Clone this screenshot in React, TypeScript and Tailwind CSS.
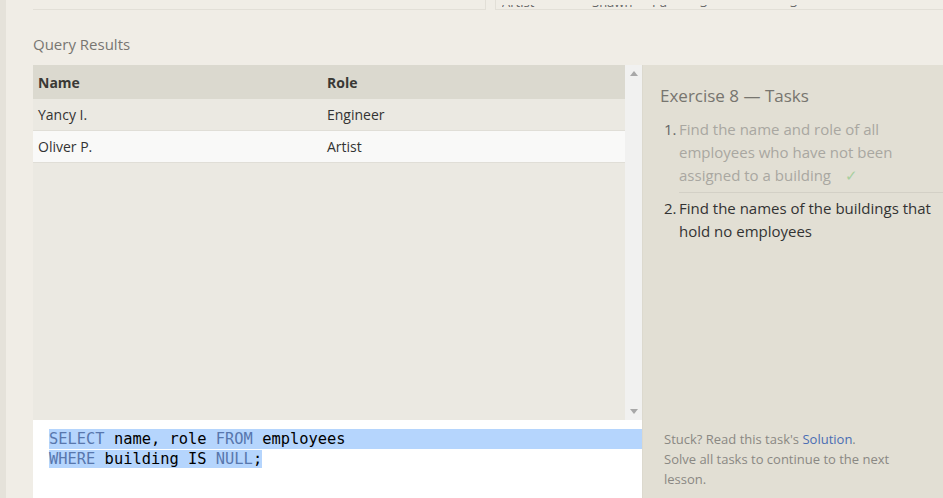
import React from "react";

const ui = { fontFamily: '"Open Sans", "Noto Sans", sans-serif' };
const mono = { fontFamily: '"DejaVu Sans Mono", "Liberation Mono", monospace' };

function Scrollbar() {
  return (
    <div className="flex w-[17px] flex-col items-center justify-between bg-[#f1f1f0] py-[6px]">
      <svg width="8" height="5" viewBox="0 0 8 5">
        <path d="M0 5 L4 0 L8 5 Z" fill="#a8a8a8" />
      </svg>
      <svg width="8" height="5" viewBox="0 0 8 5">
        <path d="M0 0 L8 0 L4 5 Z" fill="#a8a8a8" />
      </svg>
    </div>
  );
}

const rows = [
  { name: "Yancy I.", role: "Engineer", alt: false },
  { name: "Oliver P.", role: "Artist", alt: true },
];

export default function App() {
  return (
    <div className="flex h-[498px] w-[943px] overflow-hidden bg-[#f0ede6]" style={ui}>
      <div className="w-[6px] shrink-0 bg-[#e5e2da]" />
      <div className="flex min-w-0 flex-1 flex-col pl-[27px]">
        {/* previous tables, scrolled off the top */}
        <div className="flex h-[10px] shrink-0">
          <div className="w-[453px] border-r border-b border-[#e2dfd7]" />
          <div className="ml-[9px] flex flex-1 flex-col justify-end border-b border-l border-[#e2dfd7] pl-[6px] text-[13px] leading-[20px] text-[#666]">
            <div className="mb-[1px] h-[3px] overflow-hidden">
              <div className="-mt-[13px] flex">
                <span className="w-[90px]">Artist</span>
                <span className="w-[60px]">Shawn</span>
                <span className="w-[48px]">Pa</span>
                <span className="w-[90px]">3</span>
                <span>3</span>
              </div>
            </div>
          </div>
        </div>

        <div className="mt-[24px] h-[20px] text-[15px] leading-[20px] text-[#787672]">Query Results</div>

        <div className="mt-[11px] flex min-h-0 flex-1">
          <div className="flex w-[609px] shrink-0 flex-col">
            <div className="flex h-[355px]">
              <div className="flex flex-1 flex-col bg-[#ebe9e2] text-[14px] text-[#333]">
                <div className="flex h-[34px] items-center bg-[#dbd9cf] font-bold text-[#3a3936]">
                  <div className="w-[294px] pl-[5px]">Name</div>
                  <div>Role</div>
                </div>
                {rows.map((r) => (
                  <div
                    key={r.name}
                    className={`flex h-[32px] items-center border-b border-[#e0ded7] ${r.alt ? "bg-[#f9f9f8]" : "bg-[#ebe9e2]"}`}
                  >
                    <div className="w-[294px] pl-[5px]">{r.name}</div>
                    <div>{r.role}</div>
                  </div>
                ))}
              </div>
              <Scrollbar />
            </div>
            <div className="flex-1 bg-white pt-[9px] text-[15.4px] leading-[20px] text-black" style={mono}>
              <div className="ml-[16px] bg-[#b5d5fd]">
                <span className="text-[#5877ad]">SELECT</span> name, role <span className="text-[#5877ad]">FROM</span> employees
              </div>
              <div className="ml-[16px]">
                <span className="bg-[#b5d5fd]">
                  <span className="text-[#5877ad]">WHERE</span> building IS <span className="text-[#5877ad]">NULL</span>;
                </span>
              </div>
            </div>
          </div>

          <div className="flex flex-1 flex-col border-l border-[#dcd9ce] bg-[#e2dfd4] pl-[17px]">
            <div className="pt-[19px] text-[17px] leading-[24px] text-[#77756f]">Exercise 8 — Tasks</div>
            <ol className="mt-[10px] text-[15px] leading-[23px]">
              <li className="flex">
                <span className="w-[19px] pl-[4px] text-[#666]">1.</span>
                <div className="flex-1 pb-[5px] pr-[20px] text-[#a9a7a1]">
                  Find the name and role of all employees who have not been assigned to a building
                  <span className="ml-[14px] inline-block text-[#a8cfa0]">✓</span>
                </div>
              </li>
              <li className="flex">
                <span className="w-[19px] pl-[4px] pt-[5px] text-[#333]">2.</span>
                <div className="flex-1 border-t border-[#d3d0c6] pt-[4px] text-[#333]">
                  Find the names of the buildings that hold no employees
                </div>
              </li>
            </ol>
            <div className="mt-auto w-[250px] pb-[9px] pl-[4px] text-[13px] leading-[20px] text-[#8a8883]">
              Stuck? Read this task's <span className="text-[#4a6db3]">Solution</span>.
              <br />
              Solve all tasks to continue to the next lesson.
            </div>
          </div>
        </div>
      </div>
    </div>
  );
}
